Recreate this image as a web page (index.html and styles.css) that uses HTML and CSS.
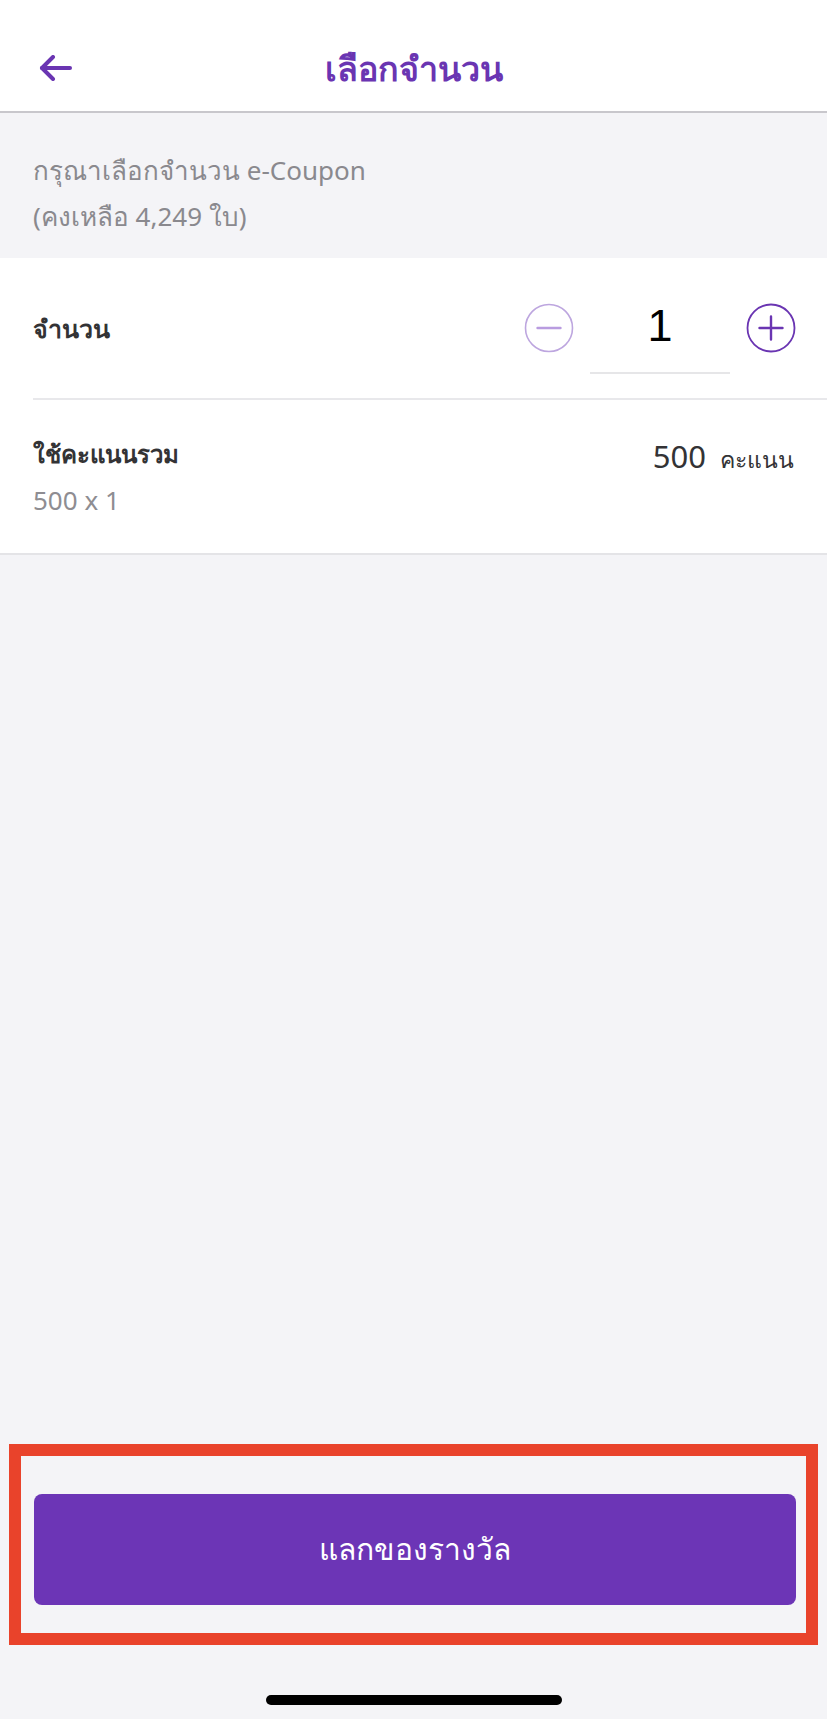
FILE: index.html
```html
<!DOCTYPE html>
<html lang="th">
<head>
<meta charset="utf-8">
<title>เลือกจำนวน</title>
<link rel="stylesheet" href="styles.css">
</head>
<body>
<div class="screen">
  <header class="topbar">
    <button class="back" aria-label="back">
      <svg width="34" height="26" viewBox="0 0 34 26" fill="none" stroke="#6a35b2" stroke-width="4" stroke-linecap="round" stroke-linejoin="round"><path d="M31 13H3"/><path d="M14 2L3 13L14 24"/></svg>
    </button>
    <h1 class="title">เลือกจำนวน</h1>
    <span></span>
  </header>

  <section class="intro">
    <p>กรุณาเลือกจำนวน e-Coupon</p>
    <p>(คงเหลือ 4,249 ใบ)</p>
  </section>

  <section class="card">
    <div class="row qty-row">
      <span class="label">จำนวน</span>
      <div class="stepper">
        <button class="step minus" aria-label="minus">
          <svg width="50" height="50" viewBox="0 0 50 50" fill="none" stroke-linecap="round"><circle cx="25" cy="25" r="23.5" stroke="#bda6df" stroke-width="1.6"/><path d="M13.5 25H36.5" stroke="#b99ce0" stroke-width="2.4"/></svg>
        </button>
        <div class="qty">1</div>
        <button class="step plus" aria-label="plus">
          <svg width="50" height="50" viewBox="0 0 50 50" fill="none" stroke-linecap="round"><circle cx="25" cy="25" r="23.5" stroke="#6a35b2" stroke-width="1.8"/><path d="M13.5 25H36.5M25 13.5V36.5" stroke="#6a35b2" stroke-width="2.4"/></svg>
        </button>
      </div>
    </div>
    <div class="row total-row">
      <div class="total-text">
        <div class="label">ใช้คะแนนรวม</div>
        <div class="sub">500 x 1</div>
      </div>
      <div class="points"><span class="num">500</span><span class="unit">คะแนน</span></div>
    </div>
  </section>

  <div class="spacer"></div>

  <footer class="footer">
    <div class="highlight">
      <button class="redeem">แลกของรางวัล</button>
    </div>
    <div class="home-indicator"></div>
  </footer>
</div>
</body>
</html>
```

FILE: styles.css
```css
* { box-sizing: border-box; }
html, body { margin: 0; padding: 0; }
body {
  background: #f4f4f7;
  font-family: "Noto Sans", "Open Sans", sans-serif;
  color: #333335;
}
.screen {
  width: 827px;
  min-height: 1719px;
  display: flex;
  flex-direction: column;
}
button {
  font: inherit;
  border: 0;
  background: none;
  padding: 0;
  margin: 0;
  cursor: pointer;
}
.topbar {
  height: 113px;
  background: #fff;
  border-bottom: 2px solid #c8c7cc;
  display: grid;
  grid-template-columns: 1fr auto 1fr;
  align-items: center;
  padding-top: 25px;
}
.back {
  justify-self: start;
  margin-left: 39px;
  display: flex;
}
.title {
  margin: 0;
  font-size: 34px;
  font-weight: 600;
  color: #6a35b2;
  line-height: 44px;
}
.intro {
  padding: 34px 33px 19px;
  color: #8a898e;
  font-size: 26px;
  line-height: 46px;
}
.intro p { margin: 0; }
.card {
  background: #fff;
  border-bottom: 2px solid #e4e4e7;
  padding-left: 33px;
}
.row {
  display: flex;
  justify-content: space-between;
  align-items: center;
}
.qty-row {
  height: 142px;
  border-bottom: 2px solid #e8e8eb;
  padding-right: 31px;
}
.label {
  font-size: 24px;
  font-weight: 600;
  color: #333335;
  line-height: 36px;
}
.qty-row .label { font-size: 25px; }
.stepper {
  display: flex;
  align-items: center;
}
.step {
  width: 50px;
  height: 50px;
  display: flex;
}
.qty {
  width: 140px;
  height: 91px;
  margin: 0 16px 0 16px;
  border-bottom: 2px solid #e6e6e8;
  display: flex;
  align-items: center;
  justify-content: center;
  font-family: "Liberation Sans", Arial, sans-serif;
  font-size: 45px;
  color: #000;
  padding-bottom: 2px;
}
.total-row {
  padding: 36px 33px 36px 0;
  align-items: flex-start;
}
.sub {
  font-size: 26px;
  line-height: 34px;
  margin-top: 11px;
  color: #8e8d92;
}
.points {
  display: flex;
  align-items: baseline;
  gap: 14px;
  line-height: 40px;
}
.points .num {
  font-size: 31px;
  color: #333335;
}
.points .unit {
  font-size: 23px;
  color: #333335;
}
.spacer { flex: 1; }
.footer {
  display: flex;
  flex-direction: column;
  align-items: center;
  padding-bottom: 14px;
}
.highlight {
  width: 809px;
  border: 12px solid #e9432b;
  padding: 38px 10px 28px 13px;
}
.redeem {
  display: flex;
  width: 100%;
  height: 111px;
  align-items: center;
  justify-content: center;
  background: #6c35b6;
  border-radius: 8px;
  color: #fff;
  font-size: 30px;
  font-weight: 500;
}
.home-indicator {
  width: 296px;
  height: 10px;
  border-radius: 5px;
  background: #000;
  margin-top: 50px;
}
```
